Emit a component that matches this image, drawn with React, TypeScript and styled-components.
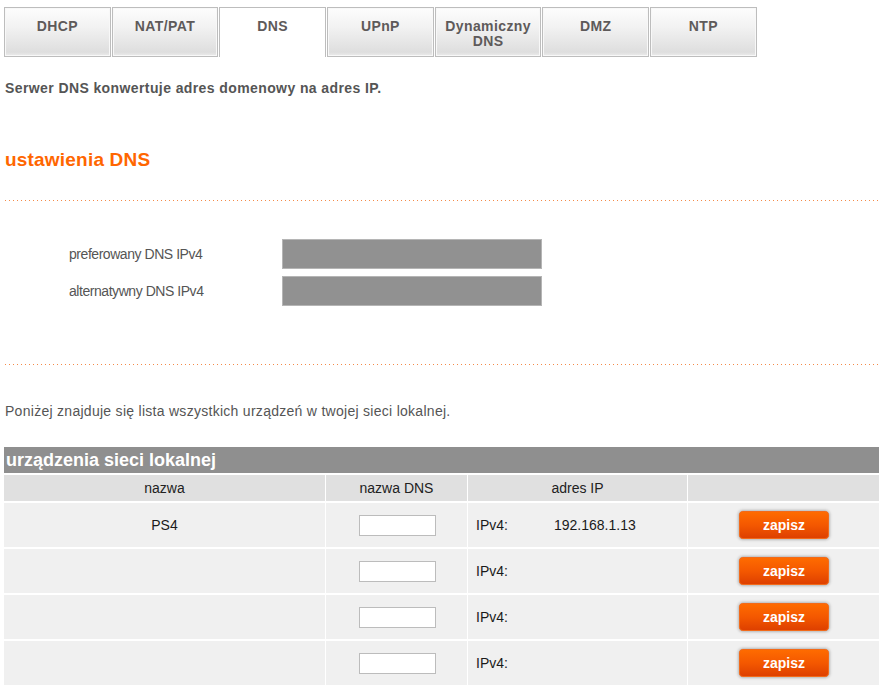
import React from 'react';
import styled, { createGlobalStyle } from 'styled-components';

const GlobalStyle = createGlobalStyle`
  body {
    margin: 0;
    background: #fff;
    font-family: "Liberation Sans", Arial, sans-serif;
    color: #555;
  }
`;

const Page = styled.div`
  width: 885px;
  padding: 7px 4px 0 4px;
  box-sizing: border-box;
`;

const Tabs = styled.div`
  display: flex;
  gap: 1px;
`;

const Tab = styled.div<{ $active?: boolean }>`
  flex: 0 0 106.7px;
  height: 50px;
  box-sizing: border-box;
  border: 1px solid #bdbdbd;
  border-bottom: ${(p) => (p.$active ? 'none' : '1px solid #bdbdbd')};
  background: ${(p) =>
    p.$active ? '#fff' : 'linear-gradient(#fdfdfd, #f2f2f2 40%, #dedede 92%, #ececec)'};
  box-shadow: ${(p) => (p.$active ? 'none' : 'inset 0 0 0 1px #f8f8f8')};
  padding-top: 11px;
  text-align: center;
  font-size: 14px;
  line-height: 15px;
  letter-spacing: 0.4px;
  font-weight: bold;
  color: #5e5a5a;
`;

const Intro = styled.p`
  margin: 23px 1px 0;
  font-size: 14px;
  letter-spacing: 0.4px;
  font-weight: bold;
  color: #555;
`;

const SectionTitle = styled.h2`
  margin: 53px 1px 0;
  font-size: 19px;
  letter-spacing: 0.2px;
  font-weight: bold;
  color: #ff6600;
`;

const Dotted = styled.div<{ $top: number }>`
  margin: ${(p) => p.$top}px 1px 0;
  height: 1px;
  background-image: linear-gradient(to right, #f48a48 1px, transparent 1px);
  background-size: 4px 1px;
`;

const Settings = styled.div`
  display: grid;
  grid-template-columns: 278px 260px;
  row-gap: 7px;
  margin-top: 38px;
  align-items: center;
`;

const Label = styled.div`
  padding-left: 65px;
  font-size: 14px;
  letter-spacing: -0.45px;
  color: #555;
`;

const MaskedField = styled.div`
  height: 30px;
  box-sizing: border-box;
  background: #919191;
  border: 1px solid #b5b5b5;
`;

const Note = styled.p`
  margin: 38px 1px 0;
  font-size: 14px;
  letter-spacing: 0.28px;
  color: #555;
`;

const DeviceTable = styled.table`
  margin-top: 26px;
  width: 877px;
  border-collapse: separate;
  border-spacing: 1px 2px;
  margin-left: -1px;
  table-layout: fixed;
`;

const TitleCell = styled.th`
  background: #8f8f8f;
  color: #fff;
  font-size: 18px;
  font-weight: bold;
  text-align: left;
  height: 26px;
  padding: 0 2px;
`;

const HeadCell = styled.th`
  background: #e0e0e0;
  color: #222;
  font-size: 14px;
  font-weight: normal;
  height: 26px;
  padding: 0;
  text-align: center;
`;

const Cell = styled.td<{ $align?: string }>`
  background: #f0f0f0;
  color: #1a1a1a;
  font-size: 14px;
  height: 44px;
  padding: 0 8px;
  text-align: ${(p) => p.$align || 'center'};
  vertical-align: middle;
`;

const NameInput = styled.input`
  width: 77px;
  height: 21px;
  box-sizing: border-box;
  border: 1px solid #bcbcbc;
  background: #fff;
  margin-left: 1px;
`;

const IpRow = styled.div`
  display: flex;
`;

const IpLabel = styled.span`
  width: 78px;
`;

const SaveButton = styled.button`
  width: 92px;
  height: 30px;
  border-radius: 5px;
  border: 1px solid #c8c8c8;
  box-shadow: 0 0 2px 1px #d4d4d4, inset 0 0 0 1px #f26a1a;
  background: linear-gradient(#ff6d00, #f45800 50%, #dc3e00);
  color: #fff;
  font-family: "Liberation Sans", Arial, sans-serif;
  font-size: 14px;
  font-weight: bold;
  cursor: pointer;
  margin-left: 1px;
`;

const tabs = ['DHCP', 'NAT/PAT', 'DNS', 'UPnP', 'Dynamiczny DNS', 'DMZ', 'NTP'];

const devices = [
  { name: 'PS4', ip: '192.168.1.13' },
  { name: '', ip: '' },
  { name: '', ip: '' },
  { name: '', ip: '' },
];

export default function App() {
  return (
    <>
      <GlobalStyle />
      <Page>
        <Tabs>
          {tabs.map((t) => (
            <Tab key={t} $active={t === 'DNS'}>
              {t === 'Dynamiczny DNS' ? (
                <>
                  Dynamiczny
                  <br />
                  DNS
                </>
              ) : (
                t
              )}
            </Tab>
          ))}
        </Tabs>
        <Intro>Serwer DNS konwertuje adres domenowy na adres IP.</Intro>
        <SectionTitle>ustawienia DNS</SectionTitle>
        <Dotted $top={29} />
        <Settings>
          <Label>preferowany DNS IPv4</Label>
          <MaskedField />
          <Label>alternatywny DNS IPv4</Label>
          <MaskedField />
        </Settings>
        <Dotted $top={58} />
        <Note>Poniżej znajduje się lista wszystkich urządzeń w twojej sieci lokalnej.</Note>
        <DeviceTable>
          <colgroup>
            <col style={{ width: 321 }} />
            <col style={{ width: 141 }} />
            <col style={{ width: 219 }} />
            <col />
          </colgroup>
          <thead>
            <tr>
              <TitleCell colSpan={4}>urządzenia sieci lokalnej</TitleCell>
            </tr>
            <tr>
              <HeadCell>nazwa</HeadCell>
              <HeadCell>nazwa DNS</HeadCell>
              <HeadCell>adres IP</HeadCell>
              <HeadCell />
            </tr>
          </thead>
          <tbody>
            {devices.map((d, i) => (
              <tr key={i}>
                <Cell>{d.name}</Cell>
                <Cell>
                  <NameInput type="text" />
                </Cell>
                <Cell $align="left">
                  <IpRow>
                    <IpLabel>IPv4:</IpLabel>
                    <span>{d.ip}</span>
                  </IpRow>
                </Cell>
                <Cell>
                  <SaveButton>zapisz</SaveButton>
                </Cell>
              </tr>
            ))}
          </tbody>
        </DeviceTable>
      </Page>
    </>
  );
}
